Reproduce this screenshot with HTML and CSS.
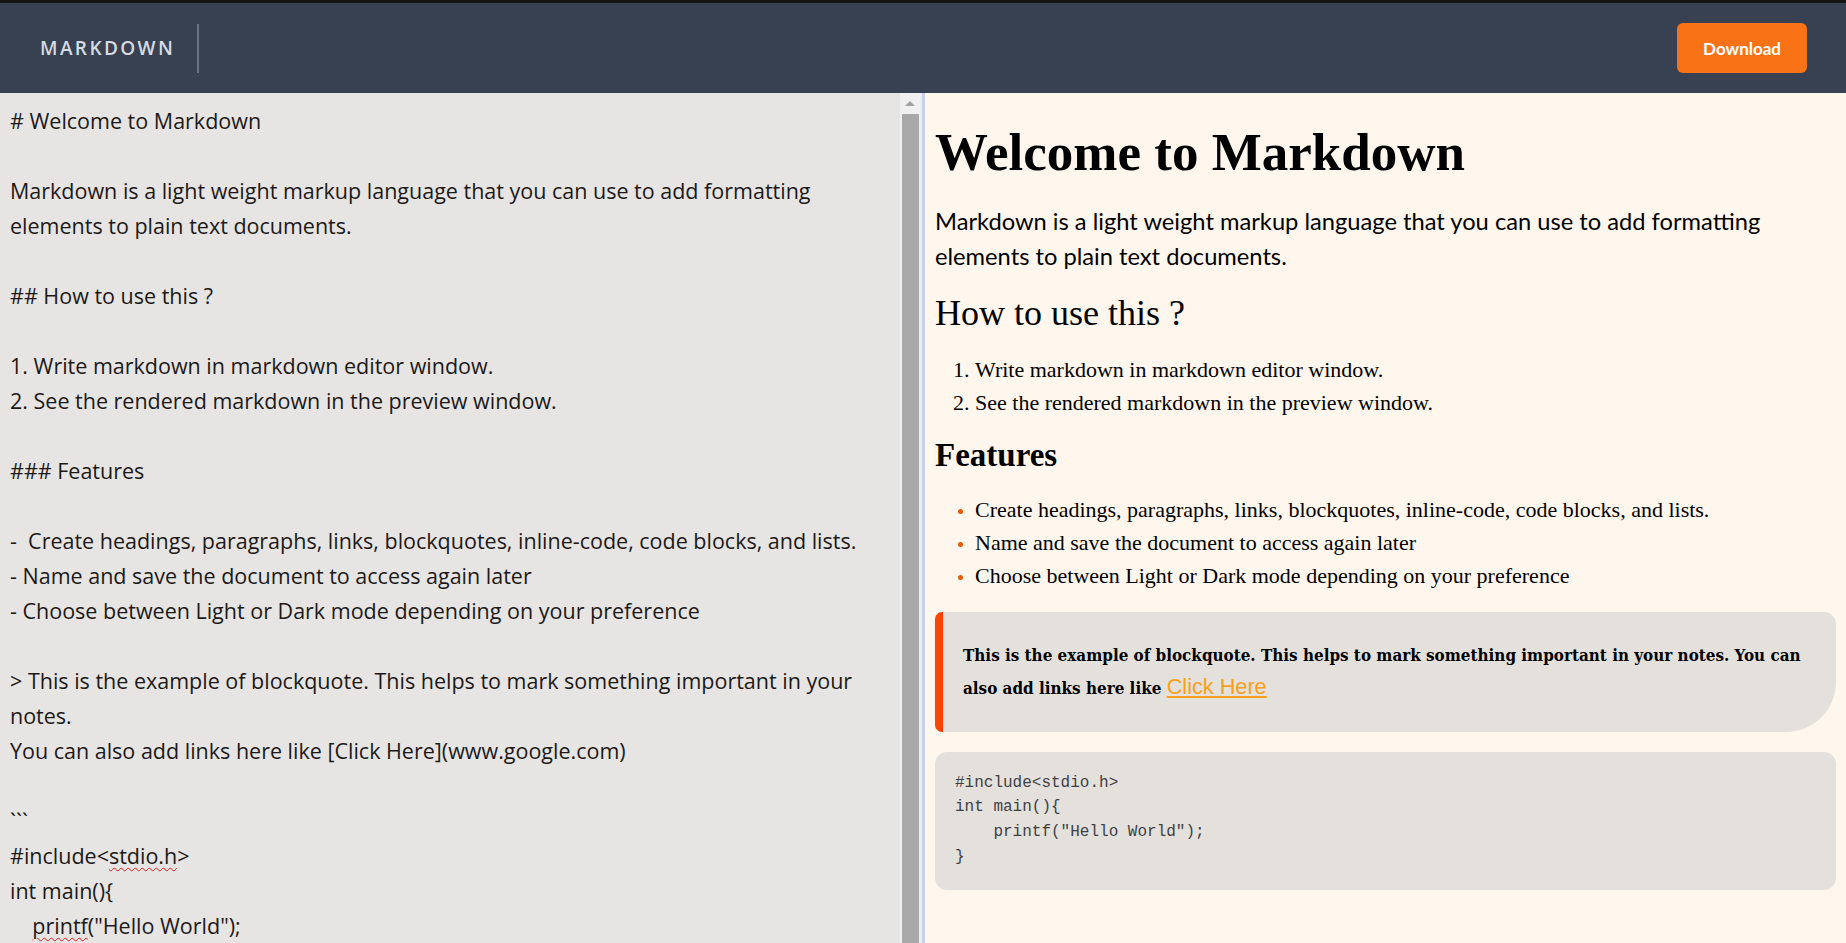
FILE: index.html
```html
<!DOCTYPE html>
<html lang="en">
<head>
<meta charset="utf-8">
<title>Markdown</title>
<link rel="stylesheet" href="styles.css">
</head>
<body>
<header class="topbar">
  <div class="brand">MARKDOWN</div>
  <div class="brand-divider"></div>
  <div class="topbar-spacer"></div>
  <button class="download" type="button">Download</button>
</header>
<main class="workspace">
  <section class="editor">
    <div class="editor-text"># Welcome to Markdown

Markdown is a light weight markup language that you can use to add formatting elements to plain text documents.

## How to use this ?

1. Write markdown in markdown editor window.
2. See the rendered markdown in the preview window.

### Features

-  Create headings, paragraphs, links, blockquotes, inline-code, code blocks, and lists.
- Name and save the document to access again later
- Choose between Light or Dark mode depending on your preference

&gt; This is the example of blockquote. This helps to mark something important in your notes.
You can also add links here like [Click Here](www.google.com)

&#96;&#96;&#96;
#include&lt;<span class="misspelled">stdio.h</span>&gt;
int main(){
    <span class="misspelled">printf</span>("Hello World");
}
&#96;&#96;&#96;</div>
    <div class="scrollbar">
      <div class="scrollbar-up"><span class="scrollbar-arrow"></span></div>
      <div class="scrollbar-thumb"></div>
    </div>
  </section>
  <div class="pane-divider"></div>
  <section class="preview">
    <h1>Welcome to Markdown</h1>
    <p class="lead">Markdown is a light weight markup language that you can use to add formatting elements to plain text documents.</p>
    <h2>How to use this ?</h2>
    <ol class="steps">
      <li>Write markdown in markdown editor window.</li>
      <li>See the rendered markdown in the preview window.</li>
    </ol>
    <h3>Features</h3>
    <ul class="features">
      <li>Create headings, paragraphs, links, blockquotes, inline-code, code blocks, and lists.</li>
      <li>Name and save the document to access again later</li>
      <li>Choose between Light or Dark mode depending on your preference</li>
    </ul>
    <blockquote class="quote">
      <p>This is the example of blockquote. This helps to mark something important in your notes. You can also add links here like <a href="#">Click Here</a></p>
    </blockquote>
    <pre class="code-block"><code>#include&lt;stdio.h&gt;
int main(){
    printf("Hello World");
}</code></pre>
  </section>
</main>
</body>
</html>
```

FILE: styles.css
```css
* { box-sizing: border-box; }

html, body { height: 100%; }

body {
  margin: 0;
  border-top: 3px solid #141414;
  background: #fff7ed;
  font-family: "Open Sans", "Noto Sans", sans-serif;
  overflow: hidden;
}

.topbar {
  height: 90px;
  background: #374151;
  display: flex;
  align-items: center;
  padding: 0 39px 0 40px;
}

.brand {
  color: #d6dbe2;
  font-family: "Open Sans", sans-serif;
  font-weight: 600;
  font-size: 19px;
  letter-spacing: 2.4px;
}

.brand-divider {
  width: 2px;
  height: 49px;
  background: #6b7280;
  margin-left: 22px;
}

.topbar-spacer { flex: 1; }

.download {
  height: 50px;
  padding: 0 26px;
  border: 0;
  border-radius: 6px;
  background: #f97316;
  color: #ffffff;
  font-family: Lato, sans-serif;
  font-weight: 700;
  font-size: 17px;
}

.workspace {
  display: flex;
  height: calc(100% - 90px);
}

.editor {
  width: 920px;
  display: flex;
  background: #e7e5e4;
}

.editor-text {
  flex: 1;
  padding: 10px 10px 0 10px;
  white-space: pre-wrap;
  font-family: "Open Sans", "Noto Sans", sans-serif;
  font-size: 21.5px;
  line-height: 35px;
  color: #1c1917;
  overflow: hidden;
}

.misspelled {
  text-decoration: underline wavy #e11d1d;
  text-decoration-thickness: 1px;
  text-underline-offset: 3px;
}

.scrollbar {
  width: 20px;
  background: #f0f0f0;
  display: flex;
  flex-direction: column;
}

.scrollbar-up {
  height: 21px;
  display: flex;
  justify-content: center;
  align-items: center;
}

.scrollbar-arrow {
  width: 0;
  height: 0;
  border-left: 5px solid transparent;
  border-right: 5px solid transparent;
  border-bottom: 5px solid #a3a3a3;
}

.scrollbar-thumb {
  flex: 1;
  margin: 0 1px 0 2px;
  background: #a8a8a8;
}

.pane-divider {
  width: 5px;
  border-left: 2px solid #eaeef3;
  background: #c7d3e4;
}

.preview {
  flex: 1;
  padding: 10px 10px 0 10px;
  background: #fff7ed;
  color: #000;
  overflow: hidden;
}

.preview h1 {
  margin: 18px 0 0;
  font-family: "Liberation Serif", "Times New Roman", serif;
  font-weight: 700;
  font-size: 53px;
  line-height: 62px;
}

.lead {
  margin: 21px 0 0;
  font-family: Lato, sans-serif;
  font-size: 23.7px;
  line-height: 35px;
}

.preview h2 {
  margin: 16.5px 0 0;
  font-family: "Liberation Serif", "Times New Roman", serif;
  font-weight: 400;
  font-size: 36px;
  line-height: 44px;
}

.steps, .features {
  margin: 18.3px 0 0;
  padding-left: 40px;
  font-family: "Liberation Serif", "Times New Roman", serif;
  font-size: 22px;
  line-height: 33px;
}

.features li::marker {
  color: #ea580c;
  font-size: 17px;
}

.preview h3 {
  margin: 15.8px 0 0;
  font-family: "Liberation Serif", "Times New Roman", serif;
  font-weight: 700;
  font-size: 33px;
  line-height: 40px;
}

.features { margin-top: 18.2px; }

.quote {
  margin: 20px 0 0;
  padding: 28.5px 24px 27.5px 20px;
  background: #e4e1dc;
  border-left: 8px solid #ff4500;
  border-radius: 7px 12px 50px 7px;
}

.quote p {
  margin: 0;
  font-family: "DejaVu Serif Condensed", "DejaVu Serif", serif;
  font-weight: 700;
  font-size: 16.9px;
  line-height: 31px;
}

.quote a {
  font-family: "Liberation Sans", Arial, sans-serif;
  font-weight: 400;
  font-size: 21.7px;
  color: #f7a01c;
  text-decoration: underline;
}

.code-block {
  margin: 20px 0 0;
  padding: 19px 20px 20px;
  background: #e4e1dc;
  border-radius: 12px;
  font-family: "Liberation Mono", monospace;
  font-size: 16px;
  line-height: 24.7px;
  color: #3f3f46;
}

.code-block code { font-family: inherit; }
```
